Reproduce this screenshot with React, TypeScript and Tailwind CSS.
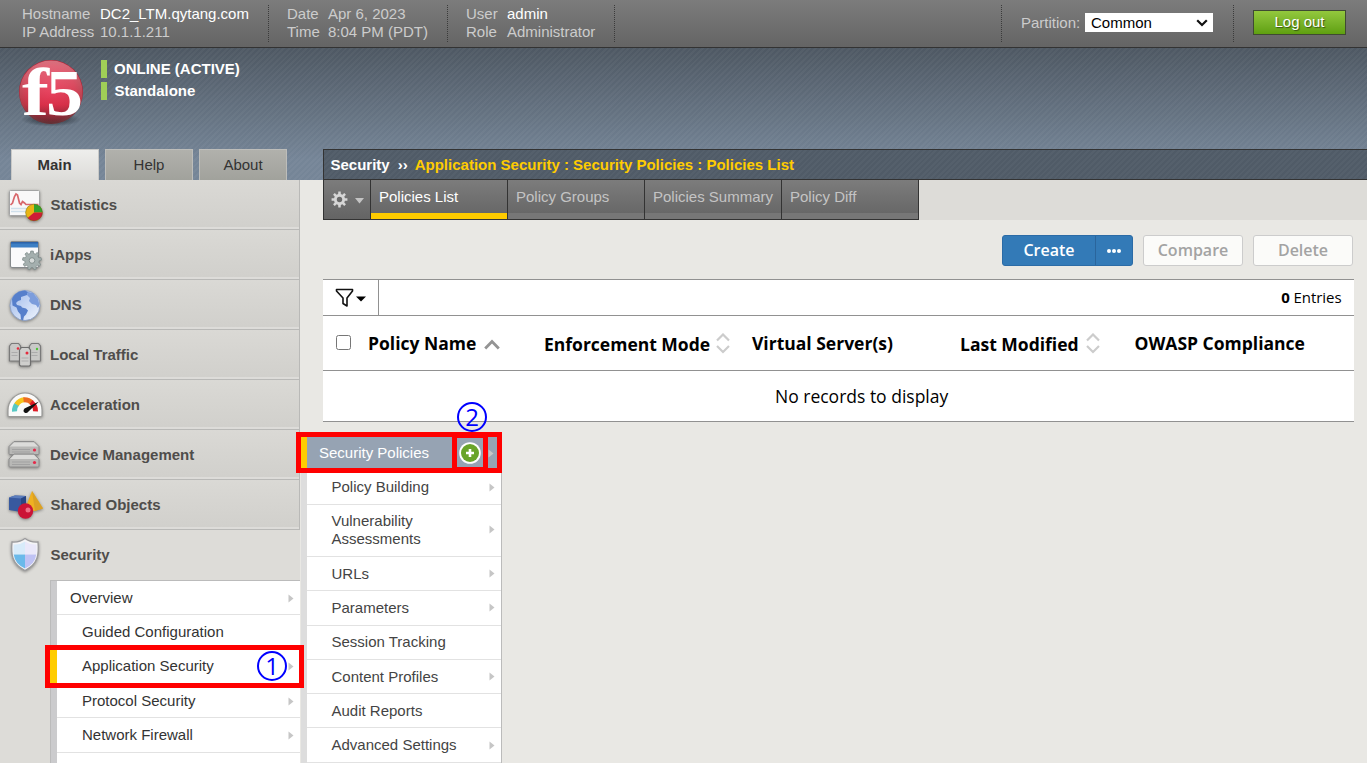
import React from "react";

const SANS = "font-['Liberation_Sans',Arial,sans-serif]";
const OPEN = "font-['Open_Sans','Noto_Sans',sans-serif]";

function Logo() {
  return (
    <svg width="68" height="68" viewBox="0 0 68 68" className="block overflow-visible">
      <defs>
        <radialGradient id="ball" cx="0.5" cy="0.45" r="0.56">
          <stop offset="0" stopColor="#e3173a" />
          <stop offset="0.65" stopColor="#cf1530" />
          <stop offset="0.88" stopColor="#b01c2e" />
          <stop offset="1" stopColor="#96484c" />
        </radialGradient>
        <linearGradient id="shine" x1="0" y1="0" x2="0" y2="1">
          <stop offset="0" stopColor="#fff" stopOpacity="0.38" />
          <stop offset="1" stopColor="#fff" stopOpacity="0" />
        </linearGradient>
        <linearGradient id="shade" x1="0" y1="0" x2="0" y2="1">
          <stop offset="0.7" stopColor="#4a2c30" stopOpacity="0" />
          <stop offset="1" stopColor="#4a2c30" stopOpacity="0.75" />
        </linearGradient>
        <radialGradient id="ballShadow">
          <stop offset="0" stopColor="#1d232b" stopOpacity="0.95" />
          <stop offset="1" stopColor="#1d232b" stopOpacity="0" />
        </radialGradient>
      </defs>
      <ellipse cx="34" cy="60.500" rx="30" ry="7" fill="url(#ballShadow)" />
      <circle cx="34" cy="33" r="32" fill="url(#ball)" />
      <circle cx="34" cy="33" r="32" fill="url(#shade)" />
      <circle cx="34" cy="33" r="31.500" fill="url(#shine)" />
      <g fill="#fff" fontFamily="'Liberation Serif',serif" fontWeight="bold">
        <text x="5" y="56" fontSize="68" textLength="27" lengthAdjust="spacingAndGlyphs">f</text>
        <text x="29" y="56" fontSize="65" textLength="37" lengthAdjust="spacingAndGlyphs">5</text>
      </g>
    </svg>
  );
}

function gearPath(cx: number, cy: number, ro: number, ri: number, teeth: number) {
  const pts: string[] = [];
  for (let i = 0; i < teeth; i++) {
    const a = (i / teeth) * Math.PI * 2 - Math.PI / 2;
    const s = Math.PI / teeth;
    [
      [ri, -s * 0.62],
      [ro, -s * 0.38],
      [ro, s * 0.38],
      [ri, s * 0.62],
    ].forEach(([r, d]) => pts.push(`${(cx + r * Math.cos(a + d)).toFixed(2)},${(cy + r * Math.sin(a + d)).toFixed(2)}`));
  }
  return `M${pts.join("L")}Z`;
}

const icons: Record<string, React.ReactNode> = {
  stats: (
    <>
      <rect x="5.500" y="6.500" width="30" height="25" rx="1" fill="#f8f8f9" stroke="#a3a4a5" />
      <path d="M7 24.500h27M7 27.500h18" stroke="#cfdfeb" strokeWidth="1.500" />
      <path d="M6.500 21l2-2 2-6.500 1.500-2.500 1.500 1 2 8 1.500 1.500 1.500-3 2 1.500 1.500 1.500h12.500" fill="none" stroke="#d8676c" strokeWidth="1.700" />
      <circle cx="30" cy="28.500" r="8.600" fill="#e9b414" />
      <path d="M30 28.500v-8.600a8.600 8.600 0 0 1 8.600 8.600z" fill="#34a22b" />
      <path d="M30 28.500h8.600a8.600 8.600 0 0 1-15 5.500z" fill="#cf1c36" />
      <circle cx="30" cy="28.500" r="8.300" fill="none" stroke="#3d5a2f" strokeOpacity="0.5" strokeWidth="0.700" />
    </>
  ),
  iapps: (
    <>
      <rect x="6.500" y="7.500" width="28" height="26" rx="1.500" fill="#fafafb" stroke="#85898c" />
      <path d="M7 8h27v5.500H7z" fill="#3d7fc4" />
      <path d="M7 8h27v1.500H7z" fill="#2c62a8" />
      <path d={gearPath(28, 26.5, 9.5, 7.2, 9)} fill="#a4afae" stroke="#7f8b8a" strokeWidth="0.800" />
      <circle cx="28" cy="26.500" r="2.800" fill="#d6dad9" stroke="#7f8b8a" strokeWidth="0.900" />
    </>
  ),
  dns: (
    <>
      <circle cx="21" cy="21.500" r="15" fill="url(#globe)" stroke="#8fa3c8" />
      <path d="M8 15c2-5 7-8.500 13-8.500l3 1.500-1 3-3 1-3 1 0 3-3 1-2 2 1 2 4 1 1 1.500 4 1 2 2-2 4-2 2-1 4-2-1-.5-5-2.500-3-1.500-4-4-2z" fill="#567fcb" />
      <path d="M24 8l5 1 5 6 1.500 6-1.500 3-2-3-4-1-3-3 1-3-3-3z" fill="#7c9ddc" />
    </>
  ),
  local: (
    <>
      {[[5.5, 9.5], [25.5, 9.5]].map(([x, y]) => (
        <g key={x}>
          <path d={`M${x} ${y + 2.5}l2-2.500h7l2 2.500v15h-11z`} fill="#c9c9c7" stroke="#7a7a7a" strokeWidth="1.200" />
          <path d={`M${x + 2} ${y + 9}h6M${x + 2} ${y + 12}h6`} stroke="#a5a5a5" strokeWidth="0.800" />
        </g>
      ))}
      <path d="M15.500 16l2-2.500h7l2 2.500v15l-1 1h-9l-1-1z" fill="#cfcfcd" stroke="#6e6e6e" strokeWidth="1.200" />
      <path d="M17.500 24h7M17.500 27h7" stroke="#a5a5a5" strokeWidth="0.800" />
      <circle cx="14" cy="14.500" r="1.300" fill="#e52b3d" />
      <circle cx="23" cy="19" r="1.500" fill="#e52b3d" />
      <circle cx="33" cy="15" r="1.200" fill="#4cc435" />
    </>
  ),
  accel: (
    <>
      <path d="M4 31.500V26a17 17 0 0 1 34 0v5.500q0 1-1 1H5q-1 0-1-1z" fill="#fafaf9" stroke="#9a9a98" strokeWidth="1.200" />
      <path d="M10.500 27.500a10.500 10.500 0 0 1 3-8" fill="none" stroke="#57c8c4" strokeWidth="5" />
      <path d="M12.500 20.500a10.500 10.500 0 0 1 8-4.800" fill="none" stroke="#f4c51c" strokeWidth="5" />
      <path d="M19.500 15.700a10.500 10.500 0 0 1 8.500 3" fill="none" stroke="#ee6c21" strokeWidth="5" />
      <path d="M27 18.300a10.500 10.500 0 0 1 4.500 9" fill="none" stroke="#dd1b25" strokeWidth="5" />
      <path d="M35 17.500L20.500 24.500q-2 2.500 0 4t4-1z" fill="#111" />
    </>
  ),
  device: (
    <>
      {[7.5, 20].map((y) => (
        <g key={y}>
          <path d={`M10 ${y}h20l5 5v7q0 1-1 1H6q-1 0-1-1v-7z`} fill="#b8b8b6" stroke="#8d8d8d" />
          <path d={`M10 ${y + 1}h20l4 4H6z`} fill="#dcdcda" />
          <path d={`M8 ${y + 8}h18M8 ${y + 10.5}h18`} stroke="#a2a2a2" />
          <circle cx="30.500" cy={y + 8.5} r="1.600" fill="#e5294a" />
        </g>
      ))}
    </>
  ),
  shared: (
    <>
      <path d="M28 7L21 25l9 2 9-2.500z" fill="#efb122" />
      <path d="M28 7l3 20 8-2.500z" fill="#dba125" />
      <path d="M5 13.500l6-2 11 .5v13l-5 3-12-2z" fill="#38599f" />
      <path d="M5 13.500l6-2 11 .5-5 2.500z" fill="#5b7dbd" />
      <path d="M17 14.500l5-2.500v13l-5 3z" fill="#284583" />
      <circle cx="21.500" cy="27" r="7.700" fill="#cb1336" />
      <circle cx="24" cy="26" r="2.500" fill="#ee6f86" />
    </>
  ),
  security: (
    <>
      <path d="M21 4.500q5 4 13 3.500c1 12 .5 22-13 28.500C7.500 30 7 20 8 8q8 .5 13-3.500z" fill="#f4f4f6" stroke="#9a9a9c" strokeWidth="1.300" />
      <path d="M21 7.500v13H9.700q-.4-5 0-10Q16 11 21 7.500z" fill="#d8ebfa" />
      <path d="M21 7.500v13h11.300q.4-5 0-10Q26 11 21 7.500z" fill="#eae8fa" />
      <path d="M21 20.500v14q-10-4.500-11.300-14z" fill="#6ab9ea" />
      <path d="M21 20.500v14q10-4.500 11.300-14z" fill="#bfc2f4" />
    </>
  ),
};

function NavIcon({ name }: { name: string }) {
  return (
    <svg width="42" height="42" viewBox="0 0 42 42" className="ml-1 block shrink-0 drop-shadow-[0_1.5px_1.5px_rgba(0,0,0,0.4)]">
      <defs>
        <linearGradient id="globe" x1="0" y1="0" x2="1" y2="1">
          <stop offset="0" stopColor="#9db8ea" />
          <stop offset="1" stopColor="#f0f5fd" />
        </linearGradient>
      </defs>
      {icons[name]}
    </svg>
  );
}

const nav = [
  { id: "stats", label: "Statistics" },
  { id: "iapps", label: "iApps" },
  { id: "dns", label: "DNS" },
  { id: "local", label: "Local Traffic" },
  { id: "accel", label: "Acceleration" },
  { id: "device", label: "Device Management" },
  { id: "shared", label: "Shared Objects" },
];

function Arrow() {
  return (
    <svg width="6" height="9" viewBox="0 0 6 9" className="block">
      <path d="M0.500 0.500v8L5.500 4.500z" fill="#c6c6c6" />
    </svg>
  );
}

const subItems = [
  { label: "Overview", indent: "h-[34px] pl-[13px] pt-px", arrow: true },
  { label: "Guided Configuration", indent: "h-[35px] pl-[25px]", arrow: false },
  { label: "Application Security", indent: "h-[34px] pl-[25px]", arrow: true },
  { label: "Protocol Security", indent: "h-[34px] pl-[25px] pt-[2px]", arrow: true },
  { label: "Network Firewall", indent: "h-[35px] pl-[25px]", arrow: true },
];

const flyItems = [
  { label: "Policy Building", arrow: true, h: "h-[34.3px] pb-[0.500px]" },
  { label: "Vulnerability Assessments", arrow: true, h: "h-[52px] pb-px" },
  { label: "URLs", arrow: true, h: "h-[34.3px]" },
  { label: "Parameters", arrow: true, h: "h-[34.3px]" },
  { label: "Session Tracking", arrow: false, h: "h-[34.3px] pb-px" },
  { label: "Content Profiles", arrow: true, h: "h-[34.3px]" },
  { label: "Audit Reports", arrow: false, h: "h-[34.3px]" },
  { label: "Advanced Settings", arrow: true, h: "h-[34.3px]" },
];

function Header() {
  return (
    <header className="flex h-12 items-start border-b border-[#333] bg-linear-to-b from-[#7c7c7c] to-[#646464] text-[15px] leading-[18px] text-[#ccc]">
      <div className="flex h-full w-[268px] shrink-0 pt-[5px] pl-[22px]">
        <div className="w-[78px] whitespace-nowrap">Hostname<br />IP Address</div>
        <div className="whitespace-nowrap"><span className="text-white">DC2_LTM.qytang.com</span><br />10.1.1.211</div>
      </div>
      <div className="mt-[5px] h-[37px] border-l border-dotted border-[#3b3b3b]" />
      <div className="flex h-full w-[178px] shrink-0 pt-[5px] pl-[18px]">
        <div className="w-[41px]">Date<br />Time</div>
        <div className="whitespace-nowrap">Apr 6, 2023<br />8:04 PM (PDT)</div>
      </div>
      <div className="mt-[5px] h-[37px] border-l border-dotted border-[#3b3b3b]" />
      <div className="flex h-full w-[166px] shrink-0 pt-[5px] pl-[18px]">
        <div className="w-[41px]">User<br />Role</div>
        <div><span className="text-white">admin</span><br />Administrator</div>
      </div>
      <div className="mt-[5px] h-[37px] border-l border-dotted border-[#3b3b3b]" />
      <div className="flex-1" />
      <div className="mt-[5px] h-[37px] border-l border-dotted border-[#3b3b3b]" />
      <div className="flex h-full w-[231px] shrink-0 pt-[13px] pl-[19px]">
        <div className="w-[64px] pt-px">Partition:</div>
        <div className="flex h-[19px] w-[128px] items-center justify-between bg-white pr-[5px] pl-[6px] text-black">
          <span>Common</span>
          <svg width="12" height="8" viewBox="0 0 12 8"><path d="M1.200 1.200L6 6l4.800-4.800" fill="none" stroke="#111" strokeWidth="2.200" /></svg>
        </div>
      </div>
      <div className="mt-[5px] h-[37px] border-l border-dotted border-[#3b3b3b]" />
      <div className="mt-[10px] mr-[21px] ml-[19px] flex h-[25px] w-[93px] shrink-0 items-center justify-center border border-[#3f4a33] bg-linear-to-b from-[#93c83d] to-[#5fa00f] pb-[2px] text-white [text-shadow:1px_1px_1px_rgba(0,0,0,0.5)]">Log out</div>
    </header>
  );
}

function SideTab({ label, active }: { label: string; active?: boolean }) {
  return (
    <div
      className={
        active
          ? "flex h-[31px] w-[88px] items-center justify-center border border-b-0 border-[#c9c9c7] bg-linear-to-b from-[#eeeeec] to-[#dddcd9] pr-px font-bold text-[#333]"
          : "flex h-[31px] w-[88px] items-center justify-center border border-b-0 border-[#bdbdba] bg-linear-to-b from-[#b1b1ac] to-[#a1a29c] text-[#333]"
      }
    >
      {label}
    </div>
  );
}

function Sidebar() {
  return (
    <aside className="h-[583px] w-[300px] shrink-0 bg-[#dddcd8]">
      {nav.map((n) => (
        <div key={n.id} className="flex h-[50px] items-center border-r border-b border-[#b9b9b7] bg-[#dddcd9] pb-[2px]">
          <div className="flex h-[47px] w-full items-center bg-linear-to-b from-[#dad9d5] to-[#d1d0cc] pt-[3px]">
            <NavIcon name={n.id} />
            <span className={`text-[15px] font-bold text-[#4f4d4b] ${n.label.startsWith("S") ? "pl-[4.500px]" : "pl-1"}`}>{n.label}</span>
          </div>
        </div>
      ))}
      <div className="flex h-[50px] items-center">
        <NavIcon name="security" />
        <span className="pl-[4.500px] text-[15px] font-bold text-[#4f4d4b]">Security</span>
      </div>
      <div className="ml-[50px] h-[183px] border-t border-l border-[#bbb] bg-[#cbcbcd] pl-[6px]">
        <div className="h-full bg-white">
          {subItems.map((s) => (
            <div key={s.label} className={`flex items-center justify-between border-b border-[#e2e2e2] pr-[6px] text-[15px] text-[#333] ${s.indent}`}>
              <span>{s.label}</span>
              {s.arrow && <Arrow />}
            </div>
          ))}
        </div>
      </div>
    </aside>
  );
}

function Flyout() {
  return (
    <div className="absolute top-[436px] left-[301px] w-[201px] border-r border-[#bbb] bg-[#ddd] pl-[6px] text-[15px] text-[#444]">
      <div className="flex h-[34.700px] items-center justify-between bg-[#96a3b3] pr-[7px] pl-3 text-white">
        <span>Security Policies</span>
        <Arrow />
      </div>
      {flyItems.map((f) => (
        <div key={f.label} className={`flex items-center justify-between border-b border-[#e2e2e2] bg-white pr-[6.500px] pl-[24.500px] leading-[18px] ${f.h}`}>
          <span className="w-[130px]">{f.label}</span>
          {f.arrow && <Arrow />}
        </div>
      ))}
    </div>
  );
}

function Sort() {
  return (
    <svg width="14" height="21" viewBox="0 0 14 21" className="block">
      <path d="M1 7.500L7 1.500l6 6M1 13l6 6 6-6" fill="none" stroke="#ccc" strokeWidth="2.200" />
    </svg>
  );
}

function Main() {
  const tabs = ["Policies List", "Policy Groups", "Policies Summary", "Policy Diff"];
  return (
    <main className="min-w-0 flex-1 bg-[#e9e8e4]">
      <div className="flex h-10 bg-[#dddcd8]">
        <div className="w-[23px] bg-[#e9e8e4]" />
        <div className="flex h-10 border border-t-0 border-[#333] bg-linear-to-b from-[#7c7c7c] to-[#646464] text-[15px]">
          <div className="flex w-[46px] items-center gap-[7px] pl-[7px]">
            <svg width="17" height="17" viewBox="0 0 17 17"><path d={gearPath(8.5, 8.5, 8, 5.6, 8)} fill="#d6d6d6" /><circle cx="8.500" cy="8.500" r="2.700" fill="#6a6a6a" /></svg>
            <svg width="9" height="6" viewBox="0 0 9 6" className="mt-[3px]"><path d="M0 0h9L4.500 5.500z" fill="#c4c4c4" /></svg>
          </div>
          {tabs.map((t, i) => (
            <div key={t} className={`flex w-[137px] flex-col justify-between border-l border-[#333] ${i === 0 ? "text-white" : "text-[#c4c4c4]"}`}>
              <span className="pt-2 pl-2 leading-[18px] whitespace-nowrap">{t}</span>
              <div className={i === 0 ? "h-[6px] bg-[#fc0]" : "h-[6px] bg-[#777]"} />
            </div>
          ))}
        </div>
      </div>
      <div className={`pr-[13px] pl-[23px] text-black ${OPEN}`}>
        <div className="flex h-[59px] justify-end gap-[10px] pt-[15px] pr-px text-[16px] font-semibold">
          <div className="flex h-[31px] w-[131px] rounded-[3px] border border-[#2b6ba6] bg-[#337ab7] text-white">
            <div className="flex w-[93px] items-center justify-center border-r border-[#2a659c] pb-[2px]">Create</div>
            <div className="flex flex-1 items-center justify-center gap-[1.500px] pt-px">
              <i className="size-[3.500px] rounded-full bg-white" /><i className="size-[3.500px] rounded-full bg-white" /><i className="size-[3.500px] rounded-full bg-white" />
            </div>
          </div>
          <div className="flex h-[31px] w-[100px] items-center justify-center rounded-[3px] border border-[#ccc] bg-[#fbfbf9] pb-[2px] text-[#a3a3a3]">Compare</div>
          <div className="flex h-[31px] w-[100px] items-center justify-center rounded-[3px] border border-[#ccc] bg-[#fbfbf9] pb-[2px] text-[#a3a3a3]">Delete</div>
        </div>
        <div className="border-y border-[#919191] bg-white">
          <div className="flex h-9 items-center justify-between border-b border-[#919191] pr-[12.500px] text-[15px]">
            <div className="flex h-full w-14 items-center border-r border-[#919191] pl-3">
              <svg width="20" height="20" viewBox="0 0 20 20"><path d="M1.500 1.500h16v1.500l-5.500 7v8l-4-2.500V10L1.500 3z" fill="none" stroke="#111" strokeWidth="1.600" strokeLinejoin="round" /></svg>
              <svg width="10" height="6" viewBox="0 0 10 6" className="mt-[3px] ml-px"><path d="M0 .5h10L5 5.500z" fill="#000" /></svg>
            </div>
            <div className="tracking-[-0.060px]"><b>0</b> Entries</div>
          </div>
          <div className="flex h-[55px] items-center border-b border-[#919191] text-[17.500px] font-bold whitespace-nowrap">
            <div className="mb-[2px] ml-[13px] size-[15px] shrink-0 rounded-[2.500px] border border-[#767676] bg-white" />
            <div className="ml-[17px] flex w-[176px] shrink-0 items-center gap-2"><span className="pt-px">Policy Name</span>
              <svg width="16" height="11" viewBox="0 0 16 11" className="mt-[2px]"><path d="M1.200 9.500L8 2.500l6.800 7" fill="none" stroke="#949494" strokeWidth="2.800" /></svg>
            </div>
            <div className="flex w-[208px] shrink-0 items-center gap-[6px]"><span className="pt-[3px]">Enforcement Mode</span><Sort /></div>
            <div className="w-[208px] shrink-0 pt-px">Virtual Server(s)</div>
            <div className="flex w-[174.500px] shrink-0 items-center gap-[7px]"><span className="pt-[3px]">Last Modified</span><Sort /></div>
            <div className="pt-px">OWASP Compliance</div>
          </div>
          <div className="flex h-[50px] items-center pl-[452px] text-[17.500px]">No records to display</div>
        </div>
      </div>
    </main>
  );
}

function Annotations() {
  return (
    <>
      <div className="absolute top-[645px] left-[45px] h-[43px] w-[259px] border-[5px] border-[#f00]" />
      <div className="absolute top-[650px] left-[50px] h-[33px] w-[7px] bg-[#fc0]" />
      <div className="absolute top-[432px] left-[296px] h-[41px] w-[206px] border-[5px] border-[#f00]" />
      <div className="absolute top-[437px] left-[301px] h-[31px] w-[6px] bg-[#fc0]" />
      <div className="absolute top-[433px] left-[452px] h-[39px] w-[36px] border-5 border-[#f00]" />
      <svg width="24" height="24" viewBox="0 0 24 24" className="absolute top-[440.500px] left-[458px]">
        <circle cx="12" cy="12" r="10.800" fill="#fff" />
        <circle cx="12" cy="12" r="9" fill="#69a42a" />
        <path d="M12 8v8M8 12h8" stroke="#fff" strokeWidth="2.600" />
      </svg>
      <div className={`absolute top-[651px] left-[257px] flex size-[30px] items-center justify-center rounded-full border-[2.500px] border-[#00f] text-[24px] leading-none font-medium text-[#00f] ${OPEN}`}>1</div>
      <div className={`absolute top-[402px] left-[457px] flex size-[30px] items-center justify-center rounded-full border-[2.500px] border-[#00f] text-[24px] leading-none font-medium text-[#00f] ${OPEN}`}>2</div>
    </>
  );
}

export default function App() {
  return (
    <div className={`relative h-[763px] w-[1367px] overflow-hidden bg-[#e9e8e4] ${SANS}`}>
      <Header />
      <section className="flex h-[132px] bg-[repeating-linear-gradient(135deg,rgba(255,255,255,0.035)_0_2px,transparent_2px_4px),linear-gradient(to_bottom,#4e5863,#758597_85%)]">
        <div className="flex w-[323px] shrink-0 flex-col justify-between">
          <div className="flex pt-[11px] pl-[17px]">
            <Logo />
            <div className="mt-px ml-4 flex flex-col gap-1 text-[15px] font-bold text-white">
              <div className="flex h-[18px] items-center border-l-[6px] border-[#a0ce57] pl-[7px]">ONLINE (ACTIVE)</div>
              <div className="flex h-[18px] items-center border-l-[6px] border-[#a0ce57] pl-[7.500px]">Standalone</div>
            </div>
          </div>
          <div className="flex gap-[6px] pl-[11px] text-[15px]">
            <SideTab label="Main" active />
            <SideTab label="Help" />
            <SideTab label="About" />
          </div>
        </div>
        <div className="mt-[101px] flex h-[31px] flex-1 items-center border border-r-0 border-[#333] bg-[repeating-linear-gradient(135deg,rgba(255,255,255,0.03)_0_2px,transparent_2px_4px)] bg-[#505b67] pt-[2px] pl-[6.500px] text-[15px] font-bold whitespace-nowrap text-[#fc0]">
          <span className="text-white">Security</span>
          <span className="mx-2 text-white">››</span>
          <span className="-ml-px">Application Security : Security Policies : Policies List</span>
        </div>
      </section>
      <div className="flex h-[583px]">
        <Sidebar />
        <Main />
      </div>
      <Flyout />
      <Annotations />
    </div>
  );
}
